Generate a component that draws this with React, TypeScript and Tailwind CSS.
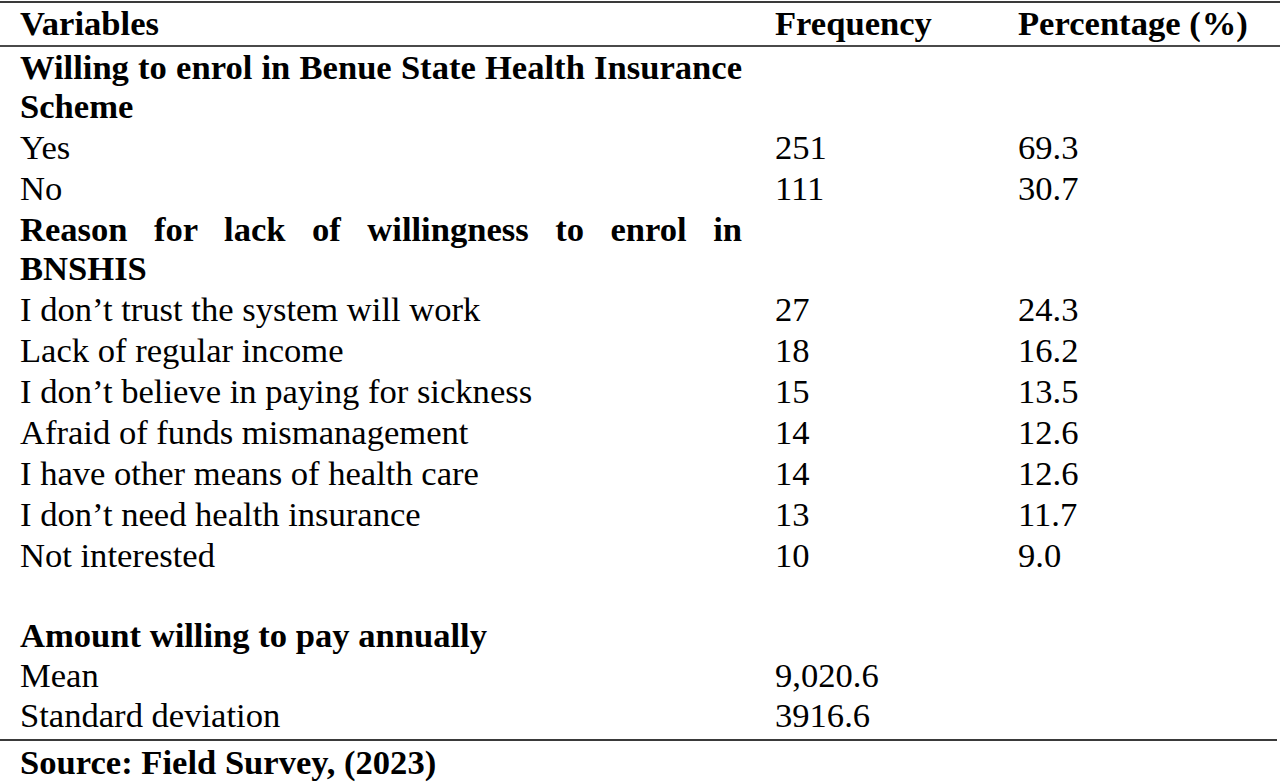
import React from "react";

type Row =
  | { kind: "head"; text: string }
  | { kind: "item"; text: string; f?: string; p?: string }
  | { kind: "blank" };

const rows: Row[] = [
  { kind: "head", text: "Willing to enrol in Benue State Health Insurance Scheme" },
  { kind: "item", text: "Yes", f: "251", p: "69.3" },
  { kind: "item", text: "No", f: "111", p: "30.7" },
  { kind: "head", text: "Reason for lack of willingness to enrol in BNSHIS" },
  { kind: "item", text: "I don\u2019t trust the system will work", f: "27", p: "24.3" },
  { kind: "item", text: "Lack of regular income", f: "18", p: "16.2" },
  { kind: "item", text: "I don\u2019t believe in paying for sickness", f: "15", p: "13.5" },
  { kind: "item", text: "Afraid of funds mismanagement", f: "14", p: "12.6" },
  { kind: "item", text: "I have other means of health care", f: "14", p: "12.6" },
  { kind: "item", text: "I don\u2019t need health insurance", f: "13", p: "11.7" },
  { kind: "item", text: "Not interested", f: "10", p: "9.0" },
  { kind: "blank" },
];

const tail: { text: string; f?: string; bold?: boolean; h: string }[] = [
  { text: "Amount willing to pay annually", bold: true, h: "h-[40px]" },
  { text: "Mean", f: "9,020.6", h: "h-[40px]" },
  { text: "Standard deviation", f: "3916.6", h: "h-[44px]" },
];

export default function App() {
  return (
    <div
      className="w-[1280px] h-[784px] bg-white text-black overflow-hidden text-[34.6px] leading-[39px]"
      style={{ fontFamily: '"Liberation Serif", "Times New Roman", serif' }}
    >
      <div className="pt-[1px]">
        <div className="border-t-2 border-[#3a3a3a]" />
        {/* header */}
        <div className="grid grid-cols-[755px_243px_1fr] pl-[20px] pt-[1px] pb-[2px] font-bold border-b-2 border-[#4a4a4a]">
          <div>Variables</div>
          <div>Frequency</div>
          <div className="whitespace-nowrap">
            Percentage (<span className="ml-[1px]">%)</span>
          </div>
        </div>
        {rows.map((r, i) => {
          if (r.kind === "blank") return <div key={i} className="h-[39px]" />;
          if (r.kind === "head")
            return (
              <div key={i} className="grid grid-cols-[755px_243px_1fr] pl-[20px] pt-[1px] pb-[1px] font-bold">
                <div className="w-[722px] text-justify">{r.text}</div>
                <div />
                <div />
              </div>
            );
          return (
            <div key={i} className="grid grid-cols-[755px_243px_1fr] pl-[20px] pt-[1px] h-[41px]">
              <div className="whitespace-nowrap">{r.text}</div>
              <div>{r.f}</div>
              <div>{r.p}</div>
            </div>
          );
        })}
        {tail.map((t, i) => (
          <div
            key={i}
            className={`grid grid-cols-[755px_243px_1fr] pl-[20px] pt-[1px] ${t.h} ${t.bold ? "font-bold" : ""}`}
          >
            <div className="whitespace-nowrap">{t.text}</div>
            <div>{t.f}</div>
            <div />
          </div>
        ))}
        <div className="w-[1277px] border-t-2 border-[#3a3a3a]" />
        <div className="pl-[20px] pt-[2px] font-bold">Source: Field Survey, (2023)</div>
      </div>
    </div>
  );
}
